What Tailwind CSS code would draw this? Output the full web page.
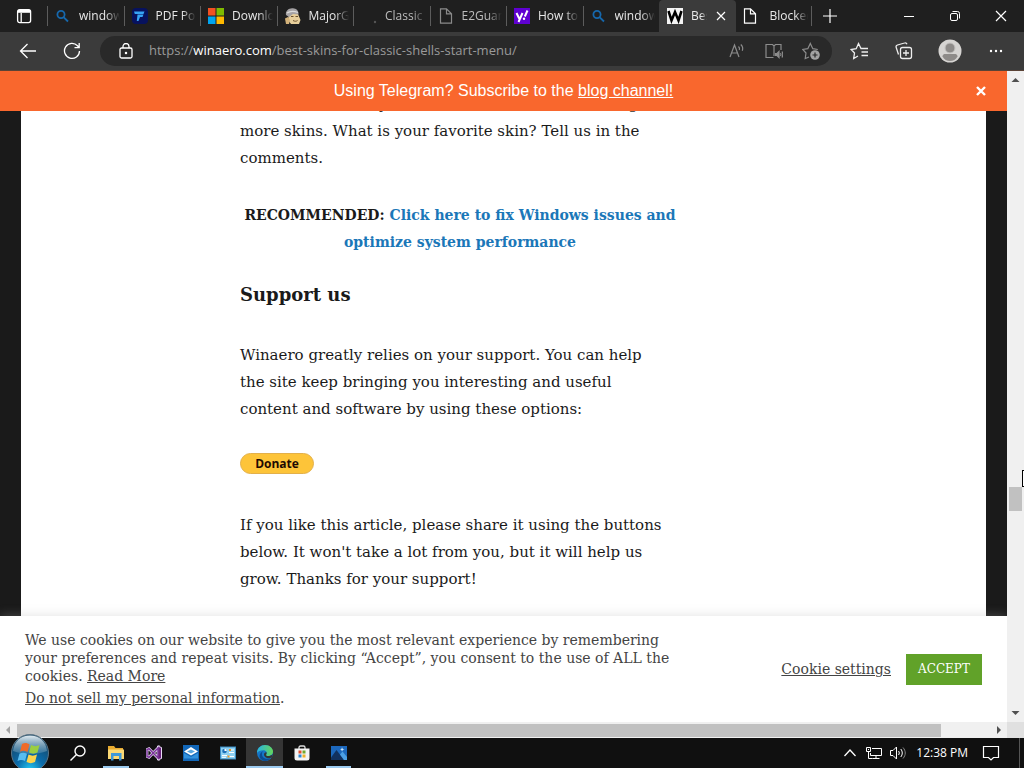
<!DOCTYPE html>
<html lang="en">
<head>
  <meta charset="UTF-8" />
  <meta name="viewport" content="width=device-width, initial-scale=1" />
  <title>Best skins for Classic Shell's Start Menu</title>
  <script src="https://cdn.jsdelivr.net/npm/@tailwindcss/browser@4"></script>
</head>
<body class="h-screen flex flex-col overflow-hidden bg-black font-['Open_Sans',sans-serif]">

  <!-- Tabs -->
  <header class="h-8 shrink-0 flex items-stretch bg-[#1f1f1f] text-[#e8e8e8] text-xs">
    <button aria-label="Tab actions" class="w-[47px] shrink-0 flex items-center justify-center">
      <svg class="w-4 h-4" viewBox="0 0 16 16" fill="none" stroke="#fff" stroke-width="1.3"><rect x="1.6" y="1.6" width="13" height="13" rx="2"/><path d="M2 4h12.500M5.200 5v9.500" /><path d="M2 3h12" stroke-width="2.400"/></svg>
    </button>
    <nav aria-label="Tabs" class="w-[765px] shrink-0 grid grid-cols-10 items-stretch">
      <a href="#" class="flex items-center gap-2 pl-2 min-w-0 relative before:absolute before:left-0 before:top-1.5 before:h-5 before:w-px before:bg-[#5c5c5c]">
        <svg class="w-4 h-4 shrink-0" viewBox="0 0 16 16" fill="none" stroke="#1668ad" stroke-width="1.8"><circle cx="6" cy="6.500" r="3.600"/><path d="M8.800 9.300 13 13.500"/></svg>
        <span class="flex-1 overflow-hidden whitespace-nowrap mr-1 [mask-image:linear-gradient(to_right,black_65%,transparent)]">windows</span>
      </a>
      <a href="#" class="flex items-center gap-2 pl-2 min-w-0 relative before:absolute before:left-0 before:top-1.5 before:h-5 before:w-px before:bg-[#5c5c5c]">
        <svg class="w-4 h-4 shrink-0" viewBox="0 0 16 16"><rect width="16" height="16" rx="4" fill="#07125e"/><path d="M2 3.500h10.500l-1 2.500H2.800zM5.500 6.500h6L10.500 9H8l-1.500 4H4.800z" fill="#36a4f4"/></svg>
        <span class="flex-1 overflow-hidden whitespace-nowrap mr-1 [mask-image:linear-gradient(to_right,black_65%,transparent)]">PDF Pop</span>
      </a>
      <a href="#" class="flex items-center gap-2 pl-2 min-w-0 relative before:absolute before:left-0 before:top-1.5 before:h-5 before:w-px before:bg-[#5c5c5c]">
        <svg class="w-4 h-4 shrink-0" viewBox="0 0 16 16"><path fill="#f25022" d="M0 0h7.500v7.500H0z"/><path fill="#7fba00" d="M8.500 0H16v7.500H8.500z"/><path fill="#00a4ef" d="M0 8.500h7.500V16H0z"/><path fill="#ffb900" d="M8.500 8.500H16V16H8.500z"/></svg>
        <span class="flex-1 overflow-hidden whitespace-nowrap mr-1 [mask-image:linear-gradient(to_right,black_65%,transparent)]">Download</span>
      </a>
      <a href="#" class="flex items-center gap-2 pl-2 min-w-0 relative before:absolute before:left-0 before:top-1.5 before:h-5 before:w-px before:bg-[#5c5c5c]">
        <svg class="w-4 h-4 shrink-0" viewBox="0 0 16 16"><path d="M4 6h9l2.500 6-1.500 4H6l-3-4z" fill="#e8cf9b"/><path d="M1 7C0 3 4 0 7.500.3 11 0 14 3 13.500 6.500L8 6l-4 3z" fill="#a5a2a4"/><path d="M2 5c3-2 7-2 11-.5" stroke="#dcdcdc" stroke-width="1.300" fill="none"/><path d="M6 8.500h2.500M10.500 8.500h2.500M8 12.500c2 1 3 1 4.500 0" stroke="#6b512d" fill="none"/><path d="M0 10.500 3 9l2 3-1 4H1z" fill="#d3b27a"/></svg>
        <span class="flex-1 overflow-hidden whitespace-nowrap mr-1 [mask-image:linear-gradient(to_right,black_65%,transparent)]">MajorGeeks</span>
      </a>
      <a href="#" class="flex items-center gap-2 pl-2 min-w-0 relative text-[#bdbdbd] before:absolute before:left-0 before:top-1.5 before:h-5 before:w-px before:bg-[#5c5c5c]">
        <svg class="w-4 h-4 shrink-0" viewBox="0 0 16 16"><circle cx="14" cy="14" r="1.200" fill="#555"/></svg>
        <span class="flex-1 overflow-hidden whitespace-nowrap mr-1 [mask-image:linear-gradient(to_right,black_65%,transparent)]">Classic</span>
      </a>
      <a href="#" class="flex items-center gap-2 pl-2 min-w-0 relative text-[#bdbdbd] before:absolute before:left-0 before:top-1.5 before:h-5 before:w-px before:bg-[#5c5c5c]">
        <svg class="w-4 h-4 shrink-0" viewBox="0 0 16 16" fill="none" stroke="#8a8a8a" stroke-width="1.200"><path d="M2.500.8h6l5 5v9.400h-11zM8.500.8v5h5"/></svg>
        <span class="flex-1 overflow-hidden whitespace-nowrap mr-1 [mask-image:linear-gradient(to_right,black_65%,transparent)]">E2Guardian</span>
      </a>
      <a href="#" class="flex items-center gap-2 pl-2 min-w-0 relative before:absolute before:left-0 before:top-1.5 before:h-5 before:w-px before:bg-[#5c5c5c]">
        <svg class="w-4 h-4 shrink-0" viewBox="0 0 16 16"><rect width="16" height="16" fill="#5f01d1"/><path d="m2.500 5 2.700 5.500M8.500 5l-4 9" stroke="#fff" stroke-width="2" fill="none"/><path d="m13.500 2.500-2.700 6" stroke="#fff" stroke-width="2"/><circle cx="10" cy="10.700" r="1.200" fill="#fff"/></svg>
        <span class="flex-1 overflow-hidden whitespace-nowrap mr-1 [mask-image:linear-gradient(to_right,black_65%,transparent)]">How to</span>
      </a>
      <a href="#" class="flex items-center gap-2 pl-2 min-w-0 relative before:absolute before:left-0 before:top-1.5 before:h-5 before:w-px before:bg-[#5c5c5c]">
        <svg class="w-4 h-4 shrink-0" viewBox="0 0 16 16" fill="none" stroke="#1668ad" stroke-width="1.800"><circle cx="6" cy="6.500" r="3.600"/><path d="M8.800 9.300 13 13.500"/></svg>
        <span class="flex-1 overflow-hidden whitespace-nowrap mr-1 [mask-image:linear-gradient(to_right,black_65%,transparent)]">windows</span>
      </a>
      <div class="flex items-center gap-2 pl-2 min-w-0 bg-[#3b3b3b] rounded-t">
        <svg class="w-4 h-4 shrink-0" viewBox="0 0 16 16"><rect width="16" height="16" fill="#f4f4f4"/><path d="m1.500 3 3 9.500L8 4l3.500 8.500 3-9.500" fill="none" stroke="#000" stroke-width="2.500"/></svg>
        <a href="#" class="w-4 overflow-hidden whitespace-nowrap [mask-image:linear-gradient(to_right,black_65%,transparent)]">Best</a>
        <button aria-label="Close tab" class="w-3 h-3">
          <svg class="w-3 h-3" viewBox="0 0 12 12" stroke="#fff" stroke-width="1.200"><path d="m2 2 8 8M10 2l-8 8"/></svg>
        </button>
      </div>
      <a href="#" class="flex items-center gap-2 pl-1.5 min-w-0 relative after:absolute after:right-0 after:top-1.5 after:h-5 after:w-px after:bg-[#5c5c5c]">
        <svg class="w-4 h-4 shrink-0" viewBox="0 0 16 16" fill="none" stroke="#fff" stroke-width="1.200"><path d="M2.500.8h6l5 5v9.400h-11zM8.500.8v5h5"/></svg>
        <span class="flex-1 overflow-hidden whitespace-nowrap mx-1 [mask-image:linear-gradient(to_right,black_65%,transparent)]">Blocked</span>
      </a>
    </nav>
    <button aria-label="New tab" class="w-9 flex items-center justify-center">
      <svg class="w-4 h-4" viewBox="0 0 16 16" stroke="#fff" stroke-width="1.200"><path d="M8 1v14M1 8h14"/></svg>
    </button>
    <div class="ml-auto flex">
      <button aria-label="Minimize" class="w-[46px] flex items-center justify-center"><svg class="w-3 h-3" viewBox="0 0 12 12" stroke="#fff"><path d="M1 6.500h10"/></svg></button>
      <button aria-label="Restore" class="w-[46px] flex items-center justify-center"><svg class="w-3 h-3" viewBox="0 0 12 12" fill="none" stroke="#fff"><rect x="1.500" y="3.500" width="7" height="7" rx="1.500"/><path d="M3.500 1.500h5a2 2 0 0 1 2 2v5"/></svg></button>
      <button aria-label="Close" class="w-[46px] flex items-center justify-center"><svg class="w-3 h-3" viewBox="0 0 12 12" stroke="#fff" stroke-width="1.200"><path d="m1 1 10 10M11 1 1 11"/></svg></button>
    </div>
  </header>

  <!-- Toolbar -->
  <div class="h-[39px] shrink-0 flex items-center bg-[#3b3b3b] border-b border-[#5a4336]">
    <button aria-label="Back" class="ml-4 w-6 flex justify-center"><svg class="w-[18px] h-[18px]" viewBox="0 0 18 18" fill="none" stroke="#fff" stroke-width="1.300"><path d="M17 9H2M8.500 2 1.500 9l7 7"/></svg></button>
    <button aria-label="Refresh" class="ml-5 w-6 flex justify-center"><svg class="w-[18px] h-[18px]" viewBox="0 0 18 18" fill="none" stroke="#fff" stroke-width="1.300"><path d="M16.500 9a7.500 7.500 0 1 1-2-5.200L16 5.500M16.200 1v4.700h-4.700"/></svg></button>
    <div class="ml-4 h-[30px] flex-1 flex items-center rounded-full bg-[#292929] pl-[18px] pr-3">
      <svg class="w-4 h-4 shrink-0" viewBox="0 0 16 16" fill="none" stroke="#fff" stroke-width="1.300"><rect x="2" y="5" width="12" height="10" rx="1.500"/><path d="M5 5V3.500a3 3 0 0 1 6 0V5"/><circle cx="8" cy="10" r=".6" fill="#fff"/></svg>
      <a href="#" aria-label="Address" class="ml-[15px] flex-1 text-[13px] whitespace-nowrap text-[#9a9a9a]">https://<span class="text-white">winaero.com</span>/best-skins-for-classic-shells-start-menu/</a>
      <div class="flex items-center gap-[19px]">
        <button aria-label="Read aloud"><svg class="w-[18px] h-[18px] block" viewBox="0 0 18 18" fill="none" stroke="#8c8c8c" stroke-width="1.200"><path d="m2 15 4.500-12L11 15M3.500 11h6M10.500 4.500c1 1 1.300 2.200.8 3.500M12.800 2.500c2 1.800 2.300 4 1.500 6.300" /></svg></button>
        <button aria-label="Immersive reader"><svg class="w-[18px] h-[18px] block" viewBox="0 0 18 18" fill="none" stroke="#8c8c8c" stroke-width="1.200"><path d="M8.500 15.500h-7.500V2.500h6.500L9 4l1.500-1.500H16V8M9 4v10"/><path d="M10.500 11.500h1.500l2-2v6l-2-2h-1.500z" fill="#8c8c8c"/><path d="M15.500 11c.6 1 .6 2 0 3M17 9.500c1 2 1 4 0 6"/></svg></button>
        <button aria-label="Add to favorites"><svg class="w-[18px] h-[18px] block" viewBox="0 0 18 18" fill="none" stroke="#8c8c8c" stroke-width="1.200"><path d="m7 15-3.800 1.500.8-5.500L.8 7.500l5-.8L8.300 1.500l2.500 5.200 5 .8"/><circle cx="13" cy="13" r="4.800" fill="#a2a2a2" stroke="none"/><path d="M13 10.500v5M10.500 13h5" stroke="#292929"/></svg></button>
      </div>
    </div>
    <button aria-label="Favorites" class="ml-[18px]"><svg class="w-5 h-[18px]" viewBox="0 0 20 18" fill="none" stroke="#eee" stroke-width="1.300"><path d="m8 14-4.300 2.500.8-5.500L1.200 7.500l5-.8L8.500 1.500l2.500 5h7M11.500 10H18M11.500 13.500H18"/></svg></button>
    <button aria-label="Collections" class="ml-[25px]"><svg class="w-[18px] h-[18px]" viewBox="0 0 18 18" fill="none" stroke="#eee" stroke-width="1.300"><rect x="5.500" y="5.500" width="11" height="11" rx="2"/><path d="M11 8v6M8 11h6M3.500 12.500 1.200 5.500a2 2 0 0 1 1.300-2.500l7-2a2 2 0 0 1 2.500 1.300"/></svg></button>
    <button aria-label="Profile" class="ml-[25px]"><svg class="w-6 h-6" viewBox="0 0 24 24"><circle cx="12" cy="12" r="11.500" fill="#d6d4d2"/><circle cx="12" cy="9" r="5" fill="#8e8b89" stroke="#c4c2c0"/><path d="M4.500 17.500c0-2 1.500-2.500 3-2.500h9c1.500 0 3 .5 3 2.500-1.500 3-4.500 4.500-7.500 4.500s-6-1.500-7.500-4.500z" fill="#8e8b89"/></svg></button>
    <button aria-label="Settings and more" class="ml-[26px] mr-5"><svg class="w-4 h-4" viewBox="0 0 16 16" fill="#fff"><circle cx="3" cy="8" r="1.200"/><circle cx="8" cy="8" r="1.200"/><circle cx="13" cy="8" r="1.200"/></svg></button>
  </div>

  <!-- Page and scrollbars -->
  <div class="flex-1 min-h-0 flex">
    <div class="flex-1 min-w-0 flex flex-col bg-[#1a1a1a]">
      <div class="h-10 shrink-0 flex items-center bg-[#f9672d] text-white font-['Liberation_Sans',sans-serif]">
        <p class="flex-1 pl-5 text-center text-base">Using Telegram? Subscribe to the <a href="#" class="underline">blog channel!</a></p>
        <button aria-label="Dismiss" class="mr-5 -ml-3"><svg class="w-3 h-3" viewBox="0 0 12 12" stroke="#fff" stroke-width="2.400"><path d="m2 2 8 8M10 2l-8 8"/></svg></button>
      </div>

      <main class="flex-1 min-h-0 overflow-hidden mx-[21px] bg-white pl-[219px] text-[#1a1a1a] font-['DejaVu_Serif',serif]">
        <article class="w-[440px] -mt-5 text-[15px] leading-[27px]">
          <p>Feel free to share your finds here, we will be adding<br>more skins. What is your favorite skin? Tell us in the<br>comments.</p>
          <p class="mt-[30px] text-center text-sm leading-[27px] font-bold">RECOMMENDED: <a href="#" class="text-[#1b77b8]">Click here to fix Windows issues and<br>optimize system performance</a></p>
          <h2 class="mt-6 text-lg leading-[30px] font-bold">Support us</h2>
          <p class="mt-8">Winaero greatly relies on your support. You can help<br>the site keep bringing you interesting and useful<br>content and software by using these options:</p>
          <button class="mt-[30px] block h-[21px] w-[74px] rounded-full border border-[#e3b04a] bg-[#fdc439] text-xs leading-4 font-bold text-[#1d0a02] font-['Open_Sans',sans-serif]">Donate</button>
          <p class="mt-[38px]">If you like this article, please share it using the buttons<br>below. It won't take a lot from you, but it will help us<br>grow. Thanks for your support!</p>
        </article>
      </main>

      <section aria-label="Cookie notice" class="h-[106px] shrink-0 flex items-center bg-white px-[25px] text-[#444] text-sm leading-[18px] font-['DejaVu_Serif',serif] shadow-[0_-1px_10px_rgba(170,170,170,0.3)]">
        <div class="flex-1 whitespace-nowrap">
          <p>We use cookies on our website to give you the most relevant experience by remembering<br>your preferences and repeat visits. By clicking “Accept”, you consent to the use of ALL the<br>cookies. <a href="#" class="underline">Read More</a></p>
          <p class="mt-1"><a href="#" class="underline">Do not sell my personal information</a>.</p>
        </div>
        <button class="underline">Cookie settings</button>
        <button class="ml-[15px] h-[31px] w-[76px] bg-[#61a229] text-white text-xs">ACCEPT</button>
      </section>

      <div class="h-4 shrink-0 flex items-center bg-[#f0f0f0]">
        <svg class="w-[17px] h-4" viewBox="0 0 17 16"><path d="m6 8 4-4v8z" fill="#a3a3a3"/></svg>
        <div class="flex-1"><div class="h-[13px] w-[95%] bg-[#c1c1c1]"></div></div>
        <svg class="w-[17px] h-4" viewBox="0 0 17 16"><path d="m11 8-4-4v8z" fill="#505050"/></svg>
      </div>
    </div>

    <div class="w-[17px] shrink-0 flex flex-col items-center bg-[#f0f0f0] relative">
      <svg class="w-[17px] h-[17px]" viewBox="0 0 17 17"><path d="m8.500 7 4 4h-8z" fill="#505050"/></svg>
      <div class="flex-1 w-[13px] pt-[399px]"><div class="h-6 bg-[#c1c1c1]"></div></div>
      <svg class="w-[17px] h-[17px]" viewBox="0 0 17 17"><path d="m8.500 10 4-4h-8z" fill="#505050"/></svg>
      <div class="h-4 w-full bg-[#e0e0e0]"></div>
      <!-- pointer at the window edge -->
      <div class="absolute right-0 top-[399px] h-[17px] w-[2px] border-y border-l border-black bg-white"></div>
    </div>
  </div>

  <!-- Taskbar -->
  <footer class="h-[30px] shrink-0 flex items-stretch bg-[#101010] text-white">
    <button aria-label="Start" class="w-[59px] relative">
      <svg class="w-[38px] h-[38px] absolute left-[11px] -top-1" viewBox="0 0 38 38">
        <defs>
          <radialGradient id="orb" cx=".5" cy=".95" r=".9"><stop offset="0" stop-color="#25c8f2"/><stop offset=".4" stop-color="#0b6cab"/><stop offset="1" stop-color="#16425f"/></radialGradient>
          <linearGradient id="gloss" x2="0" y2="1"><stop offset="0" stop-color="#e2ecf2"/><stop offset="1" stop-color="#6b9cba" stop-opacity=".4"/></linearGradient>
        </defs>
        <circle cx="19" cy="19" r="18.500" fill="url(#orb)" stroke="#5b7485"/>
        <path d="M2 17C3 7 10 1.500 19 1.500S35 7 36 17c-10 4-24 4-34 0z" fill="url(#gloss)"/>
        <path d="M11 10c3-1.500 5-1 7.500.5L16.500 18c-3-1.500-5-1.500-7.500-.3z" fill="#ef6b2a"/>
        <path d="M20 11c3 1.500 5.500 1.500 8.500 0l-2 7.500c-3 1.500-5.500 1.500-8.500 0z" fill="#9bce42"/>
        <path d="M8.500 19.500c3-1.200 5-1 7.500.3L14 27c-2.500-1.500-5-1.500-7.500 0z" fill="#59bdf0"/>
        <path d="M17.500 20.500c3 1.500 5.500 1.500 8.500 0l-2 7.500c-3 1.500-5.500 1.500-8.500 0z" fill="#fdd34c"/>
      </svg>
    </button>
    <button aria-label="Search" class="w-[38px] flex items-center justify-center"><svg class="w-4 h-4" viewBox="0 0 16 16" fill="none" stroke="#fff" stroke-width="1.400"><circle cx="10" cy="6" r="5"/><path d="M6.500 9.500.5 15.500"/></svg></button>
    <button aria-label="File Explorer" class="w-[38px] flex items-center justify-center relative after:absolute after:bottom-0 after:inset-x-1.5 after:h-0.5 after:bg-[#9ccbf0]"><svg class="w-4 h-4" viewBox="0 0 16 16"><path d="M0 1h6l1.500 2H15v11H0z" fill="#e9ab30"/><path d="M0 4.500h16V14H0z" fill="#fcd974"/><path d="M3 8h10.500v7.500H11V11H5.500v4.500H3z" fill="#3e98d8"/></svg></button>
    <button aria-label="Visual Studio" class="w-[37px] flex items-center justify-center"><svg class="w-4 h-4" viewBox="0 0 16 16" fill="none"><path d="M1 4.500 3 3.700 12 13V3L3 12.300l-2-.8z" stroke="#e9dcf6" stroke-width="2.800"/><path d="m11.500 1 4 1.500v11l-4 1.500z" fill="#68217a" stroke="#e9dcf6"/><path d="M1 4.500 3 3.700 12 13V3L3 12.300l-2-.8z" stroke="#7b379a" stroke-width="1.500"/></svg></button>
    <button aria-label="Mail" class="w-[37px] flex items-center justify-center"><svg class="w-4 h-4" viewBox="0 0 16 16"><rect width="16" height="16" fill="#1267b8"/><path d="m8 2 7 4.500-7 4-7-4z" fill="#fff"/><path d="m4 6.500 4-2 4 2-4 2z" fill="#58a6df"/><path d="m1 8 7 4 7-4v5.500H1z" fill="#3292dd"/></svg></button>
    <button aria-label="Control Panel" class="w-[37px] flex items-center justify-center"><svg class="w-4 h-4" viewBox="0 0 16 16"><rect x=".5" y="2" width="15" height="12" fill="#8dd0f2" stroke="#3b8cc2"/><circle cx="4.500" cy="6" r="2.300" fill="#1d70b8"/><path d="M4.500 6V3.700A2.300 2.300 0 0 1 6.800 6z" fill="#fff"/><path d="M9 5h5M9 7.500h5M2 10.500h5M2 12.300h4M9 11.500h5" stroke="#fff"/><path d="M10 4v2M8.500 10.500v2" stroke="#e69a28" stroke-width="2"/></svg></button>
    <button aria-label="Edge" class="w-[37px] flex items-center justify-center bg-[#353535] relative after:absolute after:bottom-0 after:inset-x-0 after:h-0.5 after:bg-[#9ccbf0]">
      <svg class="w-4 h-4" viewBox="0 0 16 16">
        <defs><linearGradient id="edge"><stop offset="0" stop-color="#29b5e2"/><stop offset="1" stop-color="#64d65b"/></linearGradient></defs>
        <circle cx="8" cy="8" r="8" fill="#1576c7"/>
        <path d="M0 8C0 3 4 0 8 0c5 0 8 3.500 8 6.500S13.500 11 11 11c-1.500 0-2.500-.6-1.800-1.500C10.500 7.500 9 5.300 6.500 5.300 3.500 5.300.5 6.500 0 8z" fill="url(#edge)"/>
        <path d="M5 8.500C4.500 12 8 15 13.500 13.200 11 16.500 7 16.300 5 15 1.500 13 1.500 8.500 6.500 5.700 5.500 6.500 5 7.500 5 8.500z" fill="#0c4b91"/>
        <path d="M9.200 9.500c-.7.900.3 1.500 1.800 1.500 2 0 3.700-.6 4.700-2l-.7 3.200c-3 1.800-7.500 1-8-2.200C7 8 8 7 9.500 7.200c.3.800.2 1.600-.3 2.300z" fill="#353535"/>
      </svg>
    </button>
    <button aria-label="Microsoft Store" class="w-[37px] flex items-center justify-center"><svg class="w-4 h-4" viewBox="0 0 16 16"><path d="M5 4V2.500A1.500 1.500 0 0 1 6.500 1h3A1.500 1.500 0 0 1 11 2.500V4" fill="none" stroke="#ddd" stroke-width="1.300"/><path d="M.5 3.500h15V13a2.500 2.500 0 0 1-2.500 2.500H3A2.500 2.500 0 0 1 .5 13z" fill="#f5f5f5"/><path fill="#e3502e" d="M4.500 5.500h3v3h-3z"/><path fill="#71a82e" d="M8.500 5.500h3v3h-3z"/><path fill="#2b86d4" d="M4.500 9.500h3v3h-3z"/><path fill="#eeb22d" d="M8.500 9.500h3v3h-3z"/></svg></button>
    <button aria-label="Photos" class="w-[37px] flex items-center justify-center relative after:absolute after:bottom-0 after:inset-x-1.5 after:h-0.5 after:bg-[#9ccbf0]"><svg class="w-4 h-4" viewBox="0 0 16 16"><rect y="1" width="16" height="14" fill="#1c68bd"/><path d="M0 12.500 5.500 5l7.500 10H0z" fill="#11315f"/><path d="m9 9.500 2.500-3L16 12v3h-3z" fill="#4ca0e4"/><path d="M11 2.200 11.800 4l1.700.5-1.700.5-.8 1.500-.6-1.500L9 4.500l1.400-.5z" fill="#cfe9fb"/></svg></button>

    <div class="ml-auto flex items-center">
      <button aria-label="Show hidden icons" class="w-6 flex justify-center"><svg class="w-3 h-3" viewBox="0 0 12 12" fill="none" stroke="#fff" stroke-width="1.300"><path d="m.5 9 5.500-6 5.500 6"/></svg></button>
      <button aria-label="Network" class="w-6 flex justify-center"><svg class="w-4 h-4" viewBox="0 0 16 16" fill="none" stroke="#fff"><path d="M6 3.500h9.500v7H4.500V8M10 10.500v3M6.500 13.500h7"/><path d="M.5 2.500h4v4h-4zM2.500 6.500v7h4M2 4.500h1"/></svg></button>
      <button aria-label="Volume" class="w-6 flex justify-center"><svg class="w-4 h-4" viewBox="0 0 16 16" fill="none" stroke="#fff"><path d="M.5 5.500H3l3.500-3.500v12L3 10.500H.5z"/><path d="M8.500 6c1 1.300 1 2.700 0 4M10.800 4c2 2.500 2 5.500 0 8"/><path d="M13 2.500c3 3.500 3 7.500 0 11" stroke="#888"/></svg></button>
      <time class="ml-1.5 text-xs">12:38 PM</time>
      <button aria-label="Notifications" class="ml-[14px] mr-[19px]"><svg class="w-[18px] h-[18px] block" viewBox="0 0 18 18" fill="none" stroke="#fff" stroke-width="1.200"><path d="M1.500 2.500h15v11h-5L9 16l-2.500-2.500h-5z"/></svg></button>
      <div class="h-full border-l border-[#555] w-[5px]"></div>
    </div>
  </footer>
</body>
</html>
